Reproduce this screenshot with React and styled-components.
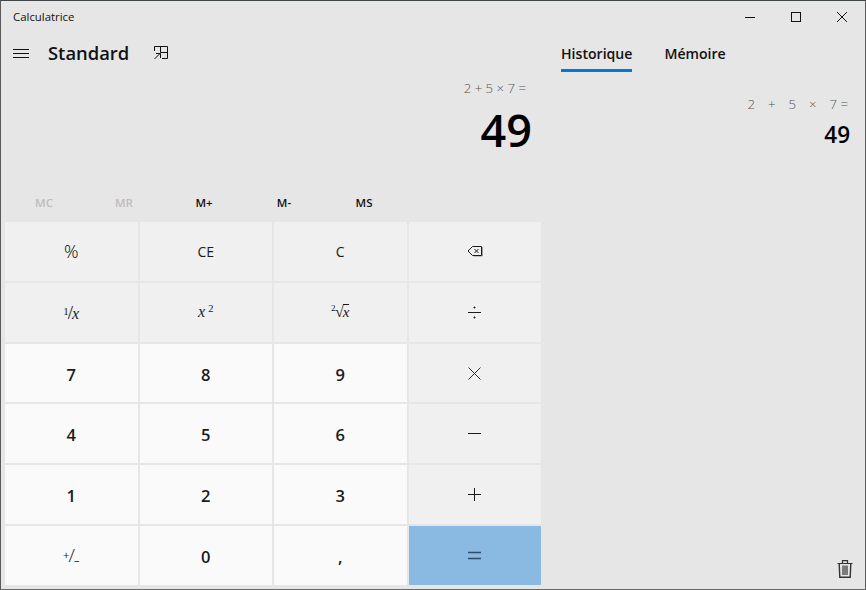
import React from 'react';
import styled, { createGlobalStyle } from 'styled-components';

const GlobalStyle = createGlobalStyle`
  html, body {
    margin: 0;
    padding: 0;
    background: #e6e6e6;
  }
  * {
    box-sizing: border-box;
  }
`;

const uiFont = `'Open Sans', 'Noto Sans', sans-serif`;
const mathFont = `'Liberation Serif', serif`;

const Glyph = ({ size = 16, children }) => (
  <svg width={size} height={size} viewBox={`0 0 ${size} ${size}`} fill="none" stroke="currentColor" strokeWidth="1">
    {children}
  </svg>
);

const memoryButtons = [
  { label: 'MC', disabled: true },
  { label: 'MR', disabled: true },
  { label: 'M+' },
  { label: 'M-' },
  { label: 'MS' },
];

const BackspaceIcon = () => (
  <Glyph>
    <path d="M1 8 L5.5 3.5 H14.5 V12.5 H5.5 Z" />
    <path d="M14.5 4 V13 H6" strokeOpacity="0.45" transform="translate(0.8 0)" />
    <path d="M7.5 6 L11.5 10 M11.5 6 L7.5 10" />
  </Glyph>
);

const App = () => {
  const keys = [
    { label: '%', size: 18, light: true },
    { label: 'CE', size: 14 },
    { label: 'C', size: 14 },
    { label: <BackspaceIcon /> },
    {
      label: (
        <Frac>
          <small>1</small>/<i>x</i>
        </Frac>
      ),
    },
    {
      label: (
        <Power>
          <i>x</i>
          <sup>2</sup>
        </Power>
      ),
    },
    {
      label: (
        <Root>
          <sup>2</sup>√<i>x</i>
        </Root>
      ),
    },
    {
      label: (
        <Glyph size={15}>
          <path d="M1 7.5 H14" />
          <circle cx="7.5" cy="2.5" r="0.6" fill="currentColor" />
          <circle cx="7.5" cy="12.5" r="0.6" fill="currentColor" />
        </Glyph>
      ),
    },
    { label: '7', kind: 'digit' },
    { label: '8', kind: 'digit' },
    { label: '9', kind: 'digit' },
    {
      label: (
        <Glyph size={15}>
          <path d="M1.5 1.5 L13.5 13.5 M13.5 1.5 L1.5 13.5" strokeWidth="0.9" />
        </Glyph>
      ),
    },
    { label: '4', kind: 'digit' },
    { label: '5', kind: 'digit' },
    { label: '6', kind: 'digit' },
    {
      label: (
        <Glyph size={15}>
          <path d="M1 7.5 H14" />
        </Glyph>
      ),
    },
    { label: '1', kind: 'digit' },
    { label: '2', kind: 'digit' },
    { label: '3', kind: 'digit' },
    {
      label: (
        <Glyph size={15}>
          <path d="M1 7.5 H14 M7.5 1 V14" />
        </Glyph>
      ),
    },
    {
      label: (
        <PlusMinus>
          <small>+</small>/<small className="minus">–</small>
        </PlusMinus>
      ),
      kind: 'plain',
    },
    { label: '0', kind: 'digit' },
    { label: ',', kind: 'digit' },
    {
      label: (
        <Glyph size={15}>
          <path d="M1 4.5 H14 M1 10.5 H14" strokeWidth="1.4" />
        </Glyph>
      ),
      kind: 'equals',
    },
  ];

  return (
    <Window>
      <GlobalStyle />
      <TitleBar>
        <AppName>Calculatrice</AppName>
        <WindowControls>
          <WindowButton>
            <Glyph size={12}>
              <path d="M1 6.5 H11" />
            </Glyph>
          </WindowButton>
          <WindowButton>
            <Glyph size={12}>
              <rect x="1.5" y="1.5" width="9" height="9" />
            </Glyph>
          </WindowButton>
          <WindowButton>
            <Glyph size={12}>
              <path d="M1 1 L11 11 M11 1 L1 11" />
            </Glyph>
          </WindowButton>
        </WindowControls>
      </TitleBar>
      <Body>
        <CalcPanel>
          <ModeBar>
            <MenuButton>
              <svg width="16" height="12" viewBox="0 0 16 12" stroke="currentColor" strokeWidth="1">
                <path d="M0 1.5 H16 M0 5.5 H16 M0 9.5 H16" />
              </svg>
            </MenuButton>
            <ModeTitle>Standard</ModeTitle>
            <CompactButton>
              <svg width="15" height="14" viewBox="0 0 15 14" fill="none" stroke="currentColor" strokeWidth="1">
                <path d="M0.5 5 V0.5 H13.5 V12.5 H8 M6.5 0.5 V6.5 H13.5" />
                <path d="M0.5 13 L6 7.5 M2 7.5 H6.5 V12" />
              </svg>
            </CompactButton>
          </ModeBar>
          <Display>
            <Expression>2 + 5 × 7 =</Expression>
            <Result>49</Result>
          </Display>
          <MemoryRow>
            {memoryButtons.map((button) => (
              <MemoryButton key={button.label} $disabled={button.disabled}>
                {button.label}
              </MemoryButton>
            ))}
          </MemoryRow>
          <Keypad>
            {keys.map((key, index) => (
              <Key key={index} $kind={key.kind} $size={key.size} $light={key.light}>
                {key.label}
              </Key>
            ))}
          </Keypad>
        </CalcPanel>
        <SidePanel>
          <Tabs>
            <Tab $active>Historique</Tab>
            <Tab>Mémoire</Tab>
          </Tabs>
          <HistoryEntry>
            <HistoryExpression>
              <span>2</span>
              <span>+</span>
              <span>5</span>
              <span>×</span>
              <span>7 =</span>
            </HistoryExpression>
            <HistoryResult>49</HistoryResult>
          </HistoryEntry>
          <TrashButton>
            <svg width="16" height="18" viewBox="0 0 16 18" fill="none" stroke="currentColor" strokeWidth="1.2">
              <path d="M0.5 3.5 H15.5 M5.5 3.5 V0.7 H10.5 V3.5" />
              <path d="M2.2 3.5 L2.8 17.2 H13.2 L13.8 3.5" strokeWidth="1.4" />
              <path d="M6 5.5 V15 M8 5.5 V15 M10 5.5 V15" />
            </svg>
          </TrashButton>
        </SidePanel>
      </Body>
    </Window>
  );
};

const Window = styled.div`
  width: 866px;
  height: 590px;
  display: flex;
  flex-direction: column;
  background: #e6e6e6;
  border: 1px solid #5a5a5a;
  border-top-color: #3f4447;
  border-bottom-color: #6a6a6a;
  color: #000;
  font-family: ${uiFont};
  overflow: hidden;
`;

const TitleBar = styled.div`
  height: 31px;
  flex: none;
  display: flex;
  align-items: center;
  justify-content: space-between;
  padding-left: 12px;
`;

const AppName = styled.div`
  font-size: 11.4px;
  color: #111;
`;

const WindowControls = styled.div`
  display: flex;
  height: 100%;
`;

const WindowButton = styled.div`
  width: 46px;
  height: 100%;
  display: flex;
  align-items: center;
  justify-content: center;
  color: #111;
`;

const Body = styled.div`
  flex: 1;
  display: flex;
  min-height: 0;
`;

const CalcPanel = styled.div`
  width: 544px;
  flex: none;
  display: flex;
  flex-direction: column;
  padding: 0 4px 4px 4px;
`;

const ModeBar = styled.div`
  height: 44px;
  flex: none;
  display: flex;
  align-items: center;
  padding-left: 8px;
`;

const MenuButton = styled.div`
  width: 35px;
  display: flex;
  align-items: center;
  color: #111;
`;

const ModeTitle = styled.div`
  font-size: 18.4px;
  font-weight: 600;
  color: #111;
  line-height: 1;
  margin-bottom: 2px;
`;

const CompactButton = styled.div`
  display: flex;
  margin-left: 25px;
  margin-bottom: 3px;
  color: #111;
`;

const Display = styled.div`
  height: 103px;
  flex: none;
  display: flex;
  flex-direction: column;
  align-items: flex-end;
  padding-right: 9px;
`;

const Expression = styled.div`
  font-size: 13.2px;
  font-weight: 300;
  line-height: 18px;
  color: #555;
  padding-right: 6px;
  margin-top: 3px;
`;

const Result = styled.div`
  font-size: 45px;
  font-weight: 600;
  line-height: 60px;
  margin-top: 3px;
`;

const MemoryRow = styled.div`
  height: 43px;
  flex: none;
  display: flex;
  margin-left: -1px;
  padding-top: 3px;
`;

const MemoryButton = styled.div`
  width: 80px;
  display: flex;
  align-items: center;
  justify-content: center;
  font-size: 11.5px;
  font-weight: 600;
  color: ${(props) => (props.$disabled ? '#bdbdbd' : '#111')};
`;

const keyBackground = {
  digit: '#fafafa',
  plain: '#fafafa',
  equals: '#8ab9e1',
};

const keyColor = (props) => {
  if (props.$kind === 'equals') return '#2f4d66';
  return props.$light ? '#000' : '#1a1a1a';
};

const Key = styled.div`
  display: flex;
  align-items: center;
  justify-content: center;
  padding-top: ${(props) => (props.$kind === 'digit' ? '2px' : '0')};
  background: ${(props) => keyBackground[props.$kind] || '#f0f0f0'};
  color: ${keyColor};
  font-size: ${(props) => (props.$kind === 'digit' ? '16.5px' : `${props.$size || 14}px`)};
  font-weight: ${(props) => {
    if (props.$kind === 'digit') return 600;
    return props.$light ? 300 : 400;
  }};
`;

const Keypad = styled.div`
  flex: 1;
  display: grid;
  grid-template-columns: repeat(4, 1fr);
  grid-template-rows: repeat(6, 1fr);
  gap: 2px;
  width: 536px;
`;

const Frac = styled.span`
  font-family: ${mathFont};
  font-size: 19px;
  font-weight: 300;
  line-height: 1;
  small {
    font-size: 11px;
    vertical-align: 4px;
    margin-right: -1px;
  }
  i {
    font-size: 16px;
    margin-left: -1px;
  }
`;

const Power = styled.span`
  font-family: ${mathFont};
  font-size: 16px;
  sup {
    font-size: 10.5px;
    line-height: 0;
    margin-left: 3px;
    vertical-align: 5px;
  }
`;

const Root = styled.span`
  font-family: ${mathFont};
  font-size: 16px;
  line-height: 1;
  display: flex;
  align-items: flex-start;
  sup {
    font-size: 9px;
    line-height: 9px;
    margin-right: -0.5px;
  }
  i {
    font-size: 15px;
    line-height: 14px;
    margin-left: -1px;
    border-top: 1px solid currentColor;
  }
`;

const PlusMinus = styled.span`
  font-size: 19px;
  font-weight: 300;
  line-height: 1;
  small {
    font-size: 11px;
    font-weight: 400;
    vertical-align: 3px;
    margin-right: -1px;
  }
  small.minus {
    vertical-align: -2px;
    margin: 0 0 0 -1px;
  }
`;

const SidePanel = styled.div`
  flex: 1;
  position: relative;
  display: flex;
  flex-direction: column;
  padding: 0 15px 0 16px;
`;

const Tabs = styled.div`
  display: flex;
  gap: 32px;
  height: 41px;
  flex: none;
`;

const Tab = styled.div`
  height: 40px;
  display: flex;
  align-items: center;
  padding-top: 6px;
  font-size: 14.1px;
  font-weight: 600;
  color: #111;
  border-bottom: 3px solid ${(props) => (props.$active ? '#0078d7' : 'transparent')};
`;

const HistoryEntry = styled.div`
  display: flex;
  flex-direction: column;
  align-items: flex-end;
  margin-top: 22px;
`;

const HistoryExpression = styled.div`
  display: flex;
  gap: 13px;
  padding-right: 2px;
  font-size: 13.2px;
  font-weight: 300;
  line-height: 18px;
  color: #555;
`;

const HistoryResult = styled.div`
  font-size: 22.5px;
  font-weight: 600;
  line-height: 30px;
  margin-top: 7px;
`;

const TrashButton = styled.div`
  position: absolute;
  right: 12px;
  bottom: 11px;
  display: flex;
  color: #333;
`;

export default App;
